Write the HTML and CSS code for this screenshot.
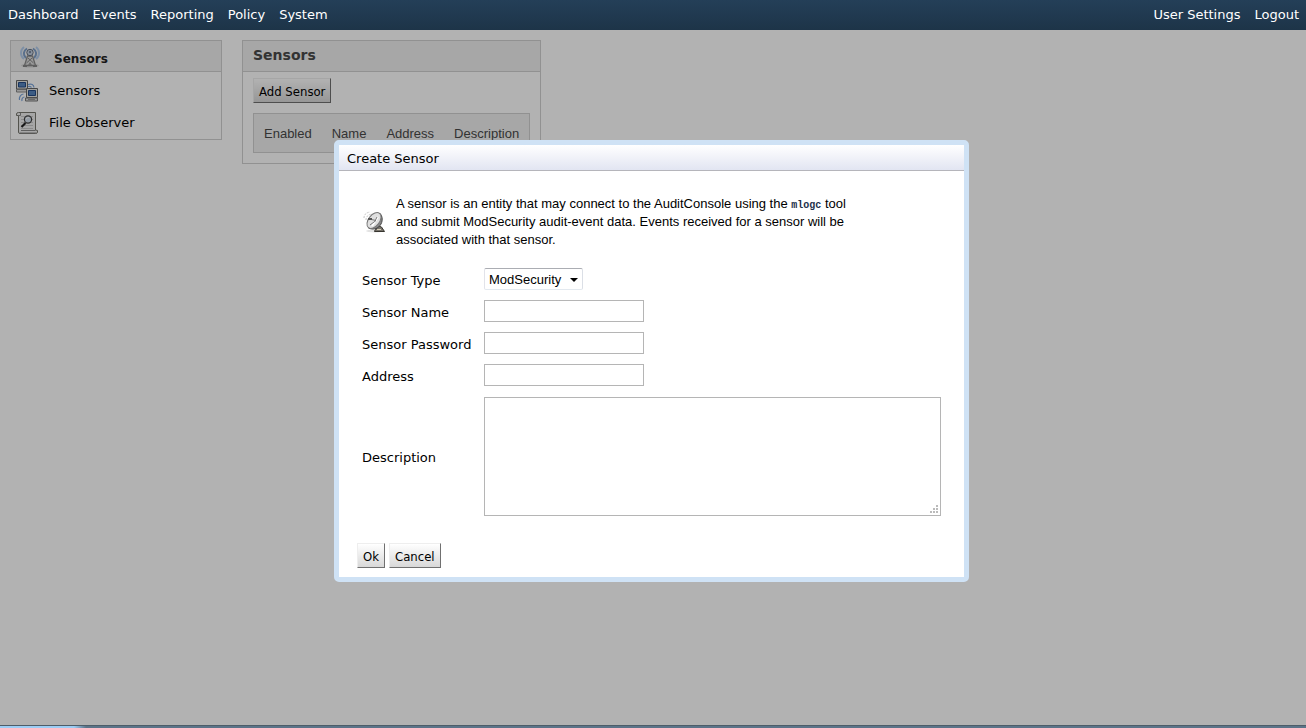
FILE: index.html
```html
<!DOCTYPE html>
<html lang="en">
<head>
<meta charset="utf-8">
<title>AuditConsole - Sensors</title>
<link rel="stylesheet" href="styles.css">
</head>
<body>
<header class="topbar">
  <nav class="menu">
    <a href="#">Dashboard</a><a href="#">Events</a><a href="#">Reporting</a><a href="#">Policy</a><a href="#">System</a>
  </nav>
  <nav class="menu">
    <a href="#">User Settings</a><a href="#">Logout</a>
  </nav>
</header>

<main class="page">
  <aside class="box sidebar">
    <h2 class="sidebar-title">
      <svg class="icon" viewBox="0 0 22 22" fill="none">
        <ellipse cx="11" cy="19.500" rx="9" ry="2" fill="#d4d4d4"/>
        <path d="M5 1C1 4 1 10 5 13M17 1c4 3 4 9 0 12" stroke="#b4cdec" stroke-width="2"/>
        <path d="M8 2.500C4 5 4 9 7 12M14 2.500c4 2.500 4 6.500 1 9.500" stroke="#7f9fc9" stroke-width="2"/>
        <path d="M8.500 10L5.500 19.500h11L13.500 10z" fill="#ddd" stroke="#8a8a8a" stroke-width="1.300"/>
        <path d="M9 12l5.500 5M13 12l-5.500 5" stroke="#8a8a8a"/>
        <path d="M9 19l2-3 2 3z" fill="#999"/>
        <path d="M4 20h4M14 20h4" stroke="#888" stroke-width="2"/>
        <circle cx="11" cy="6.500" r="3.200" fill="#c5d2e2" stroke="#667284"/>
        <circle cx="11" cy="6" r="1.200" fill="#7889a0"/>
      </svg>
      <span>Sensors</span>
    </h2>
    <ul class="links">
      <li><a href="#">
        <svg class="icon" viewBox="0 0 22 22" fill="none">
          <path d="M12 4.500c4-1 5.500 0 6 3M12 6.500c2-.5 3 0 3.500 1M3.500 20c-.5-3 1-5.500 4-6M6 21c-.5-2 .5-4 2.500-4" stroke="#7ba4da" stroke-width="1.200"/>
          <path d="M.5.500h11v8.500H.5z" fill="#e9e9e4" stroke="#666"/>
          <path d="M2.500 2.500h7v4.500h-7z" fill="#5684bd" stroke="#254b87"/>
          <path d="M.5 9.500h10V12H.5z" fill="#ddd" stroke="#888"/>
          <path d="M10.500 8.500h11v9h-11z" fill="#e9e9e4" stroke="#666"/>
          <path d="M12.500 10.500h7v5h-7z" fill="#5684bd" stroke="#254b87"/>
          <path d="M9.500 18h12v3h-12z" fill="#ddd" stroke="#777"/>
          <path d="M12 19.500h7" stroke="#999"/>
        </svg>
        <span>Sensors</span></a></li>
      <li><a href="#">
        <svg class="icon" viewBox="0 0 22 22" fill="none">
          <path d="M.5 3.500V2q0-1.500 2-1.500h17V18l2 .5v1.500q0 1.500-2 1.500H4q-1.500 0-1.500-1.500V3.500z" fill="#eee" stroke="#77776f"/>
          <path d="M2.500 3.500h2V1M5 18.500h14.500M4 21h16" stroke="#888"/>
          <path d="M5 4.500h12M5 7.500h12M5 10.500h12M5 13.500h12M5 16.500h12" stroke="#c8c8c8"/>
          <path d="M9.500 11L5.500 15" stroke="#222" stroke-width="2.200"/>
          <circle cx="12" cy="7.500" r="3.600" fill="#d5e0ed" stroke="#444" stroke-width="1.200"/>
          <path d="M10 7q1-2 3-1.500" stroke="#fff"/>
        </svg>
        <span>File Observer</span></a></li>
    </ul>
  </aside>

  <section class="box panel">
    <h2 class="panel-title">Sensors</h2>
    <div class="panel-body">
      <button class="btn" type="button">Add Sensor</button>
      <table class="list">
        <thead><tr><th>Enabled</th><th>Name</th><th>Address</th><th>Description</th></tr></thead>
      </table>
    </div>
  </section>
</main>

<footer class="strip"></footer>

<div class="backdrop">
  <form class="dialog" role="dialog" aria-labelledby="dialog-title">
    <h2 class="dialog-title" id="dialog-title">Create Sensor</h2>
    <div class="dialog-body">
      <div class="intro">
        <svg class="icon" viewBox="0 0 22 22" fill="none">
          <ellipse cx="12" cy="20" rx="9" ry="1.500" fill="#e2e2e2"/>
          <path d="M1 7q0-5 6-6M3 9q0-5 6-6M5 10q0-3 4-5" stroke="#c4c4c4" stroke-dasharray="2 1"/>
          <path d="M11.500 20l4-5 3 1 3 4.500h-10z" fill="#77736b" stroke="#37352f"/>
          <path d="M14 18.500h4" stroke="#d8cfb8"/>
          <path d="M16.500 2c3.500 3 3.500 9 .5 12.500-2.500 3.500-7.500 4.500-11.500 2.500z" fill="#888" stroke="#444"/>
          <ellipse cx="11" cy="9.500" rx="5.500" ry="9" transform="rotate(38 11 9.500)" fill="#e0e0e0" stroke="#777"/>
          <path d="M9 15l6-9" stroke="#fff" stroke-width="2"/>
          <path d="M6 8l7 1.500L7 14M12 10l2-4" stroke="#777"/>
          <path d="M5 8h4" stroke="#555" stroke-width="2"/>
        </svg>
        <p>A sensor is an entity that may connect to the AuditConsole using the <code>mlogc</code> tool and submit ModSecurity audit-event data. Events received for a sensor will be associated with that sensor.</p>
      </div>
      <div class="fields">
        <label for="type">Sensor Type</label>
        <div class="select-wrap">
          <select id="type"><option>ModSecurity</option></select>
          <svg class="arrow" viewBox="0 0 8 4"><path d="M0 0h8L4 4z"/></svg>
        </div>
        <label for="name">Sensor Name</label>
        <input id="name" type="text">
        <label for="password">Sensor Password</label>
        <input id="password" type="password">
        <label for="address">Address</label>
        <input id="address" type="text">
        <label for="description">Description</label>
        <div class="area-wrap">
          <textarea id="description"></textarea>
          <svg class="grip" viewBox="0 0 8 8" fill="#bbb"><path d="M6 0h2v2H6zM6 3h2v2H6zM6 6h2v2H6zM3 3h2v2H3zM3 6h2v2H3zM0 6h2v2H0z"/></svg>
        </div>
      </div>
      <div class="actions">
        <button class="btn" type="button">Ok</button>
        <button class="btn" type="button">Cancel</button>
      </div>
    </div>
  </form>
</div>
</body>
</html>
```

FILE: styles.css
```css
* {
  box-sizing: border-box;
}

body {
  margin: 0;
  min-height: 100vh;
  display: flex;
  flex-direction: column;
  background: #fff;
  color: #000;
  font: 13px/18px Verdana, "DejaVu Sans", sans-serif;
}

h2,
p,
ul {
  margin: 0;
  padding: 0;
}

a {
  color: inherit;
  text-decoration: none;
}

.icon {
  display: block;
  flex: none;
  width: 22px;
  height: 22px;
}

.topbar {
  position: relative;
  z-index: 2;
  display: flex;
  justify-content: space-between;
  height: 30px;
  padding: 6px 7px 6px 8px;
  background: linear-gradient(#243f58, #1d3448);
  color: #fff;
}

.menu {
  display: flex;
  gap: 14px;
}

.page {
  flex: 1;
  display: flex;
  align-items: flex-start;
  gap: 20px;
  padding: 10px;
}

.box {
  border: 1px solid #d0d0d0;
}

.sidebar {
  width: 212px;
}

.sidebar-title {
  display: flex;
  gap: 13px;
  height: 31px;
  padding: 5px 8px;
  border-bottom: 1px solid #d0d0d0;
  background: #f0f0f0;
  color: #222;
  font-size: 12px;
}

.sidebar-title span {
  padding-top: 4px;
}

.links {
  list-style: none;
  padding: 3px 5px 0;
}

.links a {
  display: flex;
  align-items: center;
  gap: 11px;
  height: 32px;
}

.panel-title {
  height: 31px;
  padding: 5px 10px;
  border-bottom: 1px solid #d0d0d0;
  background: #f0f0f0;
  color: #494949;
  font-size: 14px;
}

.panel-body {
  padding: 6px 10px 10px;
}

.btn {
  display: block;
  height: 25px;
  padding: 2px 5px 0;
  border: 1px solid;
  border-color: #eee #707070 #707070 #eee;
  background: linear-gradient(#fff, #d8d8d8);
  color: #000;
  font: 13px/18px Tahoma, "DejaVu Sans Condensed", sans-serif;
}

.list {
  height: 40px;
  margin-top: 10px;
  border: 1px solid #d0d0d0;
  border-spacing: 0;
  background: #f0f0f0;
  color: #494949;
  font: 13px/18px Arial, "Liberation Sans", sans-serif;
}

.list th {
  padding: 2px 10px 0;
  font-weight: normal;
}

.strip {
  position: relative;
  z-index: 2;
  height: 3px;
  border-top: 1px solid #4d5d69;
  background: linear-gradient(90deg, #9ccdf5 74px, #5b7388 86px);
}

.backdrop {
  position: fixed;
  inset: 0;
  z-index: 1;
  display: flex;
  justify-content: center;
  align-items: flex-start;
  padding: 140px 3px 0 0;
  background: rgba(0, 0, 0, 0.3);
}

.dialog {
  border: 5px solid #cfe2f5;
  border-radius: 5px;
  background: #fff;
}

.dialog-title {
  height: 26px;
  padding: 5px 8px 2px;
  border-bottom: 1px solid #b5b5bb;
  background: linear-gradient(#fff, #e2e5f2);
  font-size: 13px;
  font-weight: normal;
}

.dialog-body {
  padding: 24px 23px 9px 18px;
}

.intro {
  display: flex;
  align-items: center;
  gap: 11px;
  width: 500px;
  padding-left: 6px;
  font-family: Arial, "Liberation Sans", sans-serif;
}

.intro code {
  color: #1c2f4a;
  font: bold 10px/10px "Courier New", "Liberation Mono", monospace;
}

.fields {
  display: grid;
  grid-template-columns: 112px auto;
  align-items: center;
  gap: 10px;
  margin-top: 19px;
  padding-left: 5px;
}

.fields label {
  padding-top: 3px;
  white-space: nowrap;
}

.fields input,
.fields select,
.fields textarea {
  display: block;
  margin: 0;
  border: 1px solid #b5b5b5;
  background: #fff;
  font: 13px/18px Arial, "Liberation Sans", sans-serif;
}

.fields input {
  width: 160px;
  height: 22px;
}

.fields select {
  appearance: none;
  width: 99px;
  height: 22px;
  padding: 1px 18px 0 4px;
  border-color: #abadb3 #dbdfe6 #e3e9ef #e2e3ea;
  border-radius: 2px;
}

.fields textarea {
  width: 457px;
  height: 119px;
  resize: none;
}

.select-wrap,
.area-wrap {
  position: relative;
  justify-self: start;
}

.area-wrap {
  padding-top: 1px;
}

.arrow {
  position: absolute;
  top: 10px;
  right: 5px;
  width: 8px;
  height: 4px;
  pointer-events: none;
}

.grip {
  position: absolute;
  right: 3px;
  bottom: 3px;
  width: 8px;
  height: 8px;
}

.actions {
  display: flex;
  gap: 4px;
  margin-top: 27px;
}
```
